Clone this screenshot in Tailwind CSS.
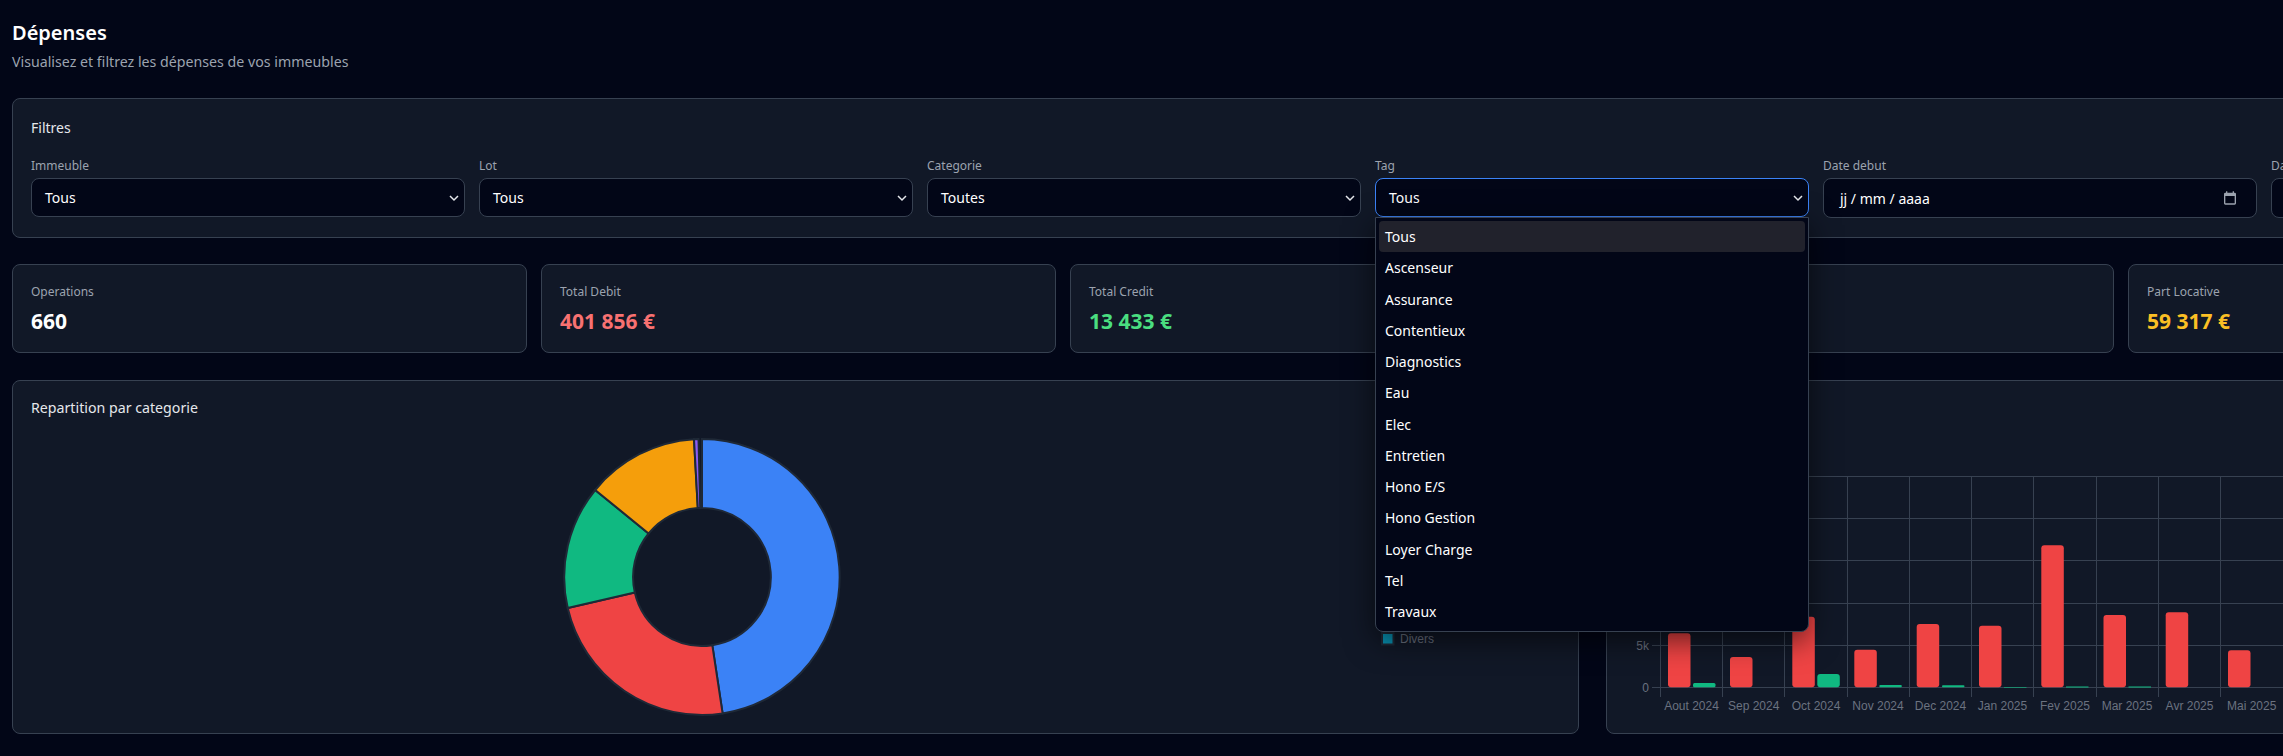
<!DOCTYPE html>
<html lang="fr">
<head>
  <meta charset="UTF-8" />
  <title>Dépenses</title>
  <script src="https://cdn.jsdelivr.net/npm/@tailwindcss/browser@4"></script>
</head>
<body class="bg-[#020617] h-[756px] overflow-hidden font-['Noto_Sans',sans-serif] text-white">
  <div class="w-[2760px] px-3 pt-[19px]">
    <h1 class="text-[20px] leading-7 font-semibold">Dépenses</h1>
    <p class="mt-[5px] text-[14.2px] leading-5 text-[#9ca3af]">Visualisez et filtrez les dépenses de vos immeubles</p>

    <!-- filtres -->
    <section class="mt-[26px] w-[2712px] h-[140px] bg-[#111827] border border-[#374151] rounded-lg px-[18px] pt-[19px]">
      <h2 class="text-[14px] leading-5 text-[#e5e7eb]">Filtres</h2>
      <div class="mt-5 grid grid-cols-[repeat(6,434px)] gap-x-[14px]">
        <div>
          <label class="block text-[12px] leading-4 text-[#9ca3af] mb-1">Immeuble</label>
          <div class="h-[39px] bg-[#020617] border border-[#374151] rounded-lg pl-[13px] pr-[5px] flex items-center justify-between text-[14px]">
            <span>Tous</span>
            <svg class="w-[10px] h-[10px]" viewBox="0 0 10 10" fill="none" stroke="#e5e7eb" stroke-width="1.5"><path d="M1 3l4 4 4-4"/></svg>
          </div>
        </div>
        <div>
          <label class="block text-[12px] leading-4 text-[#9ca3af] mb-1">Lot</label>
          <div class="h-[39px] bg-[#020617] border border-[#374151] rounded-lg pl-[13px] pr-[5px] flex items-center justify-between text-[14px]">
            <span>Tous</span>
            <svg class="w-[10px] h-[10px]" viewBox="0 0 10 10" fill="none" stroke="#e5e7eb" stroke-width="1.5"><path d="M1 3l4 4 4-4"/></svg>
          </div>
        </div>
        <div>
          <label class="block text-[12px] leading-4 text-[#9ca3af] mb-1">Categorie</label>
          <div class="h-[39px] bg-[#020617] border border-[#374151] rounded-lg pl-[13px] pr-[5px] flex items-center justify-between text-[14px]">
            <span>Toutes</span>
            <svg class="w-[10px] h-[10px]" viewBox="0 0 10 10" fill="none" stroke="#e5e7eb" stroke-width="1.5"><path d="M1 3l4 4 4-4"/></svg>
          </div>
        </div>
        <div class="relative z-20">
          <label class="block text-[12px] leading-4 text-[#9ca3af] mb-1">Tag</label>
          <div class="h-[39px] bg-[#020617] border border-[#3b82f6] rounded-lg pl-[13px] pr-[5px] flex items-center justify-between text-[14px]">
            <span>Tous</span>
            <svg class="w-[10px] h-[10px]" viewBox="0 0 10 10" fill="none" stroke="#e5e7eb" stroke-width="1.5"><path d="M1 3l4 4 4-4"/></svg>
          </div>
          <ul class="absolute left-0 top-[59px] w-[434px] h-[415px] bg-[#020617] border border-[#374151] rounded-b-lg px-[3px] pt-[3px] text-[14px] shadow-[0_8px_30px_rgba(0,0,0,0.6)]">
            <li class="h-[31.25px] flex items-center px-[6px] bg-[#21222c] rounded-sm">Tous</li>
            <li class="h-[31.25px] flex items-center px-[6px]">Ascenseur</li>
            <li class="h-[31.25px] flex items-center px-[6px]">Assurance</li>
            <li class="h-[31.25px] flex items-center px-[6px]">Contentieux</li>
            <li class="h-[31.25px] flex items-center px-[6px]">Diagnostics</li>
            <li class="h-[31.25px] flex items-center px-[6px]">Eau</li>
            <li class="h-[31.25px] flex items-center px-[6px]">Elec</li>
            <li class="h-[31.25px] flex items-center px-[6px]">Entretien</li>
            <li class="h-[31.25px] flex items-center px-[6px]">Hono E/S</li>
            <li class="h-[31.25px] flex items-center px-[6px]">Hono Gestion</li>
            <li class="h-[31.25px] flex items-center px-[6px]">Loyer Charge</li>
            <li class="h-[31.25px] flex items-center px-[6px]">Tel</li>
            <li class="h-[31.25px] flex items-center px-[6px]">Travaux</li>
          </ul>
        </div>
        <div>
          <label class="block text-[12px] leading-4 text-[#9ca3af] mb-1">Date debut</label>
          <div class="h-[40px] bg-[#020617] border border-[#374151] rounded-lg pl-[16px] pr-[18px] flex items-center justify-between text-[14px]">
            <span>jj / mm / aaaa</span>
            <svg class="w-[16px] h-[16px]" viewBox="0 0 24 24" fill="#9ca3af"><path d="M19 4h-1V2h-2v2H8V2H6v2H5a2 2 0 0 0-2 2v14a2 2 0 0 0 2 2h14a2 2 0 0 0 2-2V6a2 2 0 0 0-2-2zm0 16H5V9h14v11z"/></svg>
          </div>
        </div>
        <div>
          <label class="block text-[12px] leading-4 text-[#9ca3af] mb-1">Date fin</label>
          <div class="h-[40px] bg-[#020617] border border-[#374151] rounded-lg pl-[16px] pr-[18px] flex items-center justify-between text-[14px]">
            <span>jj / mm / aaaa</span>
            <svg class="w-[16px] h-[16px]" viewBox="0 0 24 24" fill="#9ca3af"><path d="M19 4h-1V2h-2v2H8V2H6v2H5a2 2 0 0 0-2 2v14a2 2 0 0 0 2 2h14a2 2 0 0 0 2-2V6a2 2 0 0 0-2-2zm0 16H5V9h14v11z"/></svg>
          </div>
        </div>
      </div>
    </section>

    <!-- stats -->
    <section class="mt-[26px] grid grid-cols-[repeat(5,515px)] gap-x-[14px]">
      <div class="h-[89px] bg-[#111827] border border-[#374151] rounded-lg px-[18px] pt-[19px]">
        <p class="text-[12px] leading-4 text-[#9ca3af]">Operations</p>
        <p class="mt-[7px] text-[21px] leading-7 font-bold text-white">660</p>
      </div>
      <div class="h-[89px] bg-[#111827] border border-[#374151] rounded-lg px-[18px] pt-[19px]">
        <p class="text-[12px] leading-4 text-[#9ca3af]">Total Debit</p>
        <p class="mt-[7px] text-[21px] leading-7 font-bold text-[#f87171]">401 856 €</p>
      </div>
      <div class="h-[89px] bg-[#111827] border border-[#374151] rounded-lg px-[18px] pt-[19px]">
        <p class="text-[12px] leading-4 text-[#9ca3af]">Total Credit</p>
        <p class="mt-[7px] text-[21px] leading-7 font-bold text-[#4ade80]">13 433 €</p>
      </div>
      <div class="h-[89px] bg-[#111827] border border-[#374151] rounded-lg px-[18px] pt-[19px]">
        <p class="text-[12px] leading-4 text-[#9ca3af]">Solde</p>
        <p class="mt-[7px] text-[21px] leading-7 font-bold text-white">388 423 €</p>
      </div>
      <div class="h-[89px] bg-[#111827] border border-[#374151] rounded-lg px-[18px] pt-[19px]">
        <p class="text-[12px] leading-4 text-[#9ca3af]">Part Locative</p>
        <p class="mt-[7px] text-[21px] leading-7 font-bold text-[#fbbf24]">59 317 €</p>
      </div>
    </section>

    <!-- charts -->
    <section class="mt-[27px] grid grid-cols-[1567px_1020px] gap-x-[27px]">
      <div class="h-[354px] bg-[#111827] border border-[#374151] rounded-lg flex flex-col">
        <h2 class="ml-[18px] mt-[17px] text-[14.2px] leading-5 text-[#e5e7eb]">Repartition par categorie</h2>
        <svg class="w-[1565px] h-[300px] font-['Liberation_Sans',sans-serif]" viewBox="0 0 1565 300">
          <!-- donut, centre 689 / 159, r 138 / 69 -->
          <g stroke="#1f2937" stroke-width="2">
            <path fill="#3b82f6" d="M689 21A138 138 0 0 1 709.6 295.4L699.3 227.2A69 69 0 0 0 689 90Z"/>
            <path fill="#ef4444" d="M709.6 295.4A138 138 0 0 1 554.7 190L621.8 174.5A69 69 0 0 0 699.3 227.2Z"/>
            <path fill="#10b981" d="M554.7 190A138 138 0 0 1 582.2 72L635.6 115.5A69 69 0 0 0 621.8 174.5Z"/>
            <path fill="#f59e0b" d="M582.2 72A138 138 0 0 1 681 21.2L684.8 90.1A69 69 0 0 0 635.6 115.5Z"/>
            <path fill="#8b5cf6" d="M681 21.2A138 138 0 0 1 685.5 21L687.2 90A69 69 0 0 0 684.8 90.1Z"/>
          </g>
          <rect x="1369" y="215" width="11.5" height="11.5" fill="#0891b2" stroke="#1f2937" stroke-width="2"/>
          <text x="1387" y="225" font-size="12" fill="#6b7280">Divers</text>
        </svg>
      </div>

      <div class="h-[354px] bg-[#111827] border border-[#374151] rounded-lg flex flex-col">
        <h2 class="ml-[18px] mt-[17px] text-[14.2px] leading-5 text-[#e5e7eb]">Evolution mensuelle</h2>
        <svg class="w-[1018px] h-[300px] font-['Liberation_Sans',sans-serif]" viewBox="1607 418 1018 300">
          <g stroke="#374151" stroke-width="1" shape-rendering="crispEdges">
            <path d="M1652 476.5H2660M1652 518.5H2660M1652 560.5H2660M1652 603.5H2660M1652 645.5H2660M1652 687.5H2660"/>
            <path d="M1660.5 476V697M1722.5 476V697M1784.5 476V697M1847.5 476V697M1909.5 476V697M1971.5 476V697M2033.5 476V697M2096.5 476V697M2158.5 476V697M2220.5 476V697"/>
          </g>
          <g fill="#ef4444">
            <rect x="1668" y="633.3" width="22.5" height="54" rx="3"/>
            <rect x="1730" y="657" width="22.5" height="30.3" rx="3"/>
            <rect x="1792.3" y="616.7" width="22.5" height="70.6" rx="3"/>
            <rect x="1854.3" y="649.7" width="22.5" height="37.6" rx="3"/>
            <rect x="1916.7" y="624" width="22.5" height="63.3" rx="3"/>
            <rect x="1979" y="625.7" width="22.5" height="61.6" rx="3"/>
            <rect x="2041.3" y="545.3" width="22.5" height="142" rx="3"/>
            <rect x="2103.5" y="615" width="22.5" height="72.3" rx="3"/>
            <rect x="2165.7" y="612.3" width="22.5" height="75" rx="3"/>
            <rect x="2228" y="650.3" width="22.5" height="37" rx="3"/>
          </g>
          <g fill="#10b981">
            <rect x="1693" y="683" width="22.5" height="4.3" rx="1.5"/>
            <rect x="1817.3" y="674" width="22.5" height="13.3" rx="3"/>
            <rect x="1879.3" y="685" width="22.5" height="2.3" rx="1"/>
            <rect x="1942" y="685.3" width="22.5" height="2" rx="1"/>
            <rect x="2004" y="687" width="22.5" height="0.6"/>
            <rect x="2066" y="686.5" width="22.5" height="1"/>
            <rect x="2128.5" y="686.5" width="22.5" height="1"/>
          </g>
          <g font-size="12" fill="#6b7280" text-anchor="end">
            <text x="1649" y="649.5">5k</text>
            <text x="1649" y="691.5">0</text>
          </g>
          <g font-size="12" fill="#6b7280" text-anchor="middle">
            <text x="1691.5" y="710">Aout 2024</text>
            <text x="1753.7" y="710">Sep 2024</text>
            <text x="1816" y="710">Oct 2024</text>
            <text x="1878" y="710">Nov 2024</text>
            <text x="1940.5" y="710">Dec 2024</text>
            <text x="2002.5" y="710">Jan 2025</text>
            <text x="2065" y="710">Fev 2025</text>
            <text x="2127" y="710">Mar 2025</text>
            <text x="2189.5" y="710">Avr 2025</text>
            <text x="2251.7" y="710">Mai 2025</text>
          </g>
        </svg>
      </div>
    </section>
  </div>
</body>
</html>
